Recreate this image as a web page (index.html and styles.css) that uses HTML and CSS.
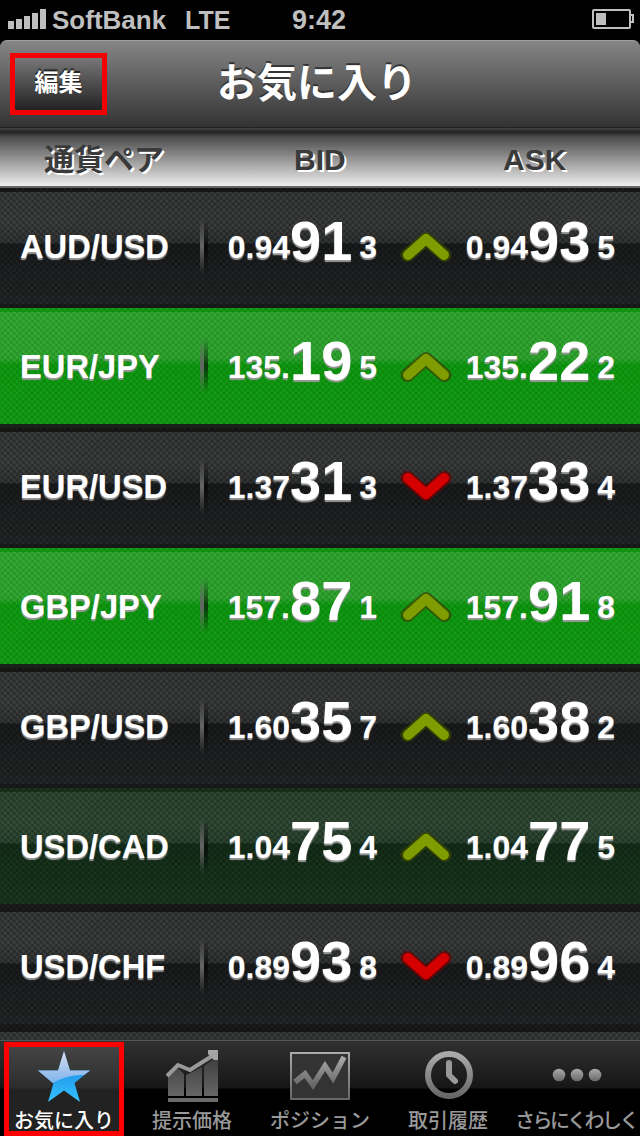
FILE: index.html
```
<!DOCTYPE html>
<html lang="ja">
  <head>
    <meta charset="UTF-8" />
    <title>お気に入り</title>
    <link rel="stylesheet" href="styles.css">
  </head>

  <body>
    <svg class="defs">
      <defs>
        <linearGradient id="gray" x1="0" y1="0" x2="0" y2="1">
          <stop offset="0" stop-color="#aaa" />
          <stop offset="1" stop-color="#686868" />
        </linearGradient>
        <linearGradient id="bar" x1="0" y1="0" x2="0" y2="1">
          <stop offset="0" stop-color="#3c3c3c" />
          <stop offset="1" stop-color="#666" />
        </linearGradient>
        <linearGradient id="blue" x1="0" y1="0" x2="0" y2="1">
          <stop offset="0" stop-color="#1478dc" />
          <stop offset="1" stop-color="#35c4ff" />
        </linearGradient>
        <linearGradient id="shine" x1="0" y1="0" x2="0" y2="1">
          <stop offset="0" stop-color="#dcdde8" />
          <stop offset="1" stop-color="#7db4ef" />
        </linearGradient>
      </defs>
      <symbol id="up" viewBox="0 0 56 36">
        <path class="edge" d="M9.500 27L28 11L46.500 27" />
        <path class="fill" d="M10 27L28 11L46 27" />
      </symbol>
      <symbol id="down" viewBox="0 0 56 36">
        <path class="edge" d="M9.500 10L28 26L46.500 10" />
        <path class="fill" d="M10 10L28 26L46 10" />
      </symbol>
    </svg>

    <div class="wrap">
      <div class="status">
        <svg class="signal" width="38" height="20" viewBox="0 0 38 20">
          <path d="M0 12h6v8H0zM8 10h6v10H8zM16 7h6v13h-6zM24 4h6v16h-6zM32 0h6v20h-6z" fill="#bfbfbf" />
        </svg>
        <span class="carrier">SoftBank</span>
        <span class="net">LTE</span>
        <span class="time">9:42</span>
        <svg class="battery" width="43" height="20" viewBox="0 0 43 20">
          <rect x="1" y="1" width="37" height="18" rx="1" fill="none" stroke="#bfbfbf" stroke-width="2" />
          <path d="M38 6h3v7h-3" fill="none" stroke="#bfbfbf" stroke-width="2" />
          <rect x="4" y="4" width="10" height="12" fill="#bfbfbf" />
        </svg>
      </div>

      <div class="nav">
        <button class="edit">編集</button>
        <h1>お気に入り</h1>
      </div>

      <div class="head">
        <span class="h-pair">通貨ペア</span>
        <span class="h-bid">BID</span>
        <span class="h-ask">ASK</span>
      </div>

      <div class="list">
        <div class="row">
          <div class="pair">AUD/USD</div>
          <div class="price"><span class="s">0.94</span><b>91</b><i>3</i></div>
          <svg class="arrow"><use href="#up" /></svg>
          <div class="price"><span class="s">0.94</span><b>93</b><i>5</i></div>
        </div>
        <div class="row green">
          <div class="pair">EUR/JPY</div>
          <div class="price"><span class="s">135.</span><b>19</b><i>5</i></div>
          <svg class="arrow"><use href="#up" /></svg>
          <div class="price"><span class="s">135.</span><b>22</b><i>2</i></div>
        </div>
        <div class="row">
          <div class="pair">EUR/USD</div>
          <div class="price"><span class="s">1.37</span><b>31</b><i>3</i></div>
          <svg class="arrow"><use href="#down" /></svg>
          <div class="price"><span class="s">1.37</span><b>33</b><i>4</i></div>
        </div>
        <div class="row green">
          <div class="pair">GBP/JPY</div>
          <div class="price"><span class="s">157.</span><b>87</b><i>1</i></div>
          <svg class="arrow"><use href="#up" /></svg>
          <div class="price"><span class="s">157.</span><b>91</b><i>8</i></div>
        </div>
        <div class="row">
          <div class="pair">GBP/USD</div>
          <div class="price"><span class="s">1.60</span><b>35</b><i>7</i></div>
          <svg class="arrow"><use href="#up" /></svg>
          <div class="price"><span class="s">1.60</span><b>38</b><i>2</i></div>
        </div>
        <div class="row fade">
          <div class="pair">USD/CAD</div>
          <div class="price"><span class="s">1.04</span><b>75</b><i>4</i></div>
          <svg class="arrow"><use href="#up" /></svg>
          <div class="price"><span class="s">1.04</span><b>77</b><i>5</i></div>
        </div>
        <div class="row">
          <div class="pair">USD/CHF</div>
          <div class="price"><span class="s">0.89</span><b>93</b><i>8</i></div>
          <svg class="arrow"><use href="#down" /></svg>
          <div class="price"><span class="s">0.89</span><b>96</b><i>4</i></div>
        </div>
        <div class="row"></div>
      </div>

      <div class="tabs">
        <div class="tab on">
          <svg width="54" height="56" viewBox="0 0 54 56">
            <path d="M27 3L33 22.500H53L37.500 35L43 54L27 42.500L11 54L16.500 35L1 22.500H21Z" fill="url(#blue)" />
            <path d="M27 3L33 22.500H53L47 27Q32 26 15.500 35L1 22.500H21Z" fill="url(#shine)" />
          </svg>
          <span>お気に入り</span>
        </div>
        <div class="tab">
          <svg width="54" height="56" viewBox="0 0 54 56">
            <path d="M3 29L13 20L19 26V48H3zM21 27L37 19V48H21zM39 18L53 8V48H39z" fill="url(#bar)" />
            <path d="M3 50H53V54H3z" fill="#6b6b6b" />
            <path d="M2 28L13 17L25 22L47 8" fill="none" stroke="#999" stroke-width="4" />
            <path d="M43 2H53V12H49L43 6z" fill="#a5a5a5" />
          </svg>
          <span>提示価格</span>
        </div>
        <div class="tab">
          <svg width="60" height="56" viewBox="0 0 60 56">
            <rect x="1" y="5" width="58" height="46" fill="#333" stroke="url(#gray)" stroke-width="2" />
            <path d="M5 34L15 26L23 37L35 18L43 30L54 9" fill="none" stroke="url(#gray)" stroke-width="5.500" />
          </svg>
          <span>ポジション</span>
        </div>
        <div class="tab">
          <svg width="54" height="56" viewBox="0 0 54 56">
            <circle cx="28" cy="27" r="21" fill="none" stroke="url(#gray)" stroke-width="6" />
            <path d="M28 15V27L34 33" fill="none" stroke="#999" stroke-width="6" stroke-linecap="round" stroke-linejoin="round" />
          </svg>
          <span>取引履歴</span>
        </div>
        <div class="tab">
          <svg width="54" height="56" viewBox="0 0 54 56">
            <g fill="url(#gray)">
              <circle cx="10" cy="27" r="6.300" />
              <circle cx="28" cy="27" r="6.300" />
              <circle cx="46" cy="27" r="6.300" />
            </g>
          </svg>
          <span class="long">さらにくわしく</span>
        </div>
      </div>
    </div>
  </body>
</html>
```
FILE: styles.css
```
* {
  padding: 0;
  margin: 0;
  box-sizing: border-box;
}

body {
  background-color: #000;
  font-family: "Liberation Sans", "Noto Sans CJK JP", sans-serif;
  overflow: hidden;
}

.defs {
  position: absolute;
  width: 0;
  height: 0;
}

.wrap {
  display: flex;
  flex-direction: column;
  width: 640px;
  height: 1136px;
}

/* 状态栏 */
.status {
  display: flex;
  height: 40px;
  padding: 0 5px 0 8px;
  color: #bfbfbf;
  font-weight: bold;
  font-size: 27px;
  line-height: 40px;
  white-space: nowrap;
}

.signal {
  margin-top: 9px;
}

.carrier {
  width: 133px;
  margin-left: 6px;
  font-size: 26px;
}

.net {
  width: 107px;
  font-size: 25px;
}

.battery {
  margin: 9px 0 0 auto;
}

/* 导航 */
.nav {
  display: flex;
  height: 88px;
  padding: 12px 10px 0;
  border-top: 1px solid #a0a0a0;
  border-bottom: 1px solid #222;
  border-radius: 7px 7px 0 0;
  background: linear-gradient(#858585, #333);
}

.edit {
  width: 97px;
  height: 62px;
  padding-bottom: 6px;
  border: 5px solid #f40000;
  background: linear-gradient(#777, #222);
  color: #fff;
  font: bold 24px "Noto Sans CJK JP", sans-serif;
  line-height: 46px;
  text-shadow: 0 -2px 1px #222;
}

h1 {
  width: 206px;
  margin-left: 110px;
  color: #fff;
  font: bold 40px "Noto Sans CJK JP", sans-serif;
  line-height: 54px;
  text-shadow: 0 -2px 0 #333;
  white-space: nowrap;
}

.head {
  display: flex;
  height: 60px;
  border-bottom: 2px solid #666;
  background: linear-gradient(#444 0, #222 4px, #4c4c4c 9px, #eee 100%);
  color: #3a3a3a;
  font-weight: bold;
  font-size: 30px;
  line-height: 64px;
  text-shadow: 2px 2px 0 #fff;
}

.h-pair {
  width: 250px;
  padding-left: 44px;
}

.h-bid {
  width: 210px;
  padding-left: 44px;
}

.h-ask {
  width: 180px;
  padding-left: 43px;
}

/* 列表 */
.list {
  height: 852px;
  overflow: hidden;
}

.row {
  display: flex;
  height: 120px;
  background:
    repeating-linear-gradient(45deg, rgba(0, 0, 0, .18) 0 1.7px, transparent 1.7px 4.24px),
    repeating-linear-gradient(-45deg, rgba(0, 0, 0, .18) 0 1.7px, transparent 1.7px 4.24px),
    linear-gradient(#1b1b1c 0, #1b1b1c 4px, #3b3d3d 4px, #3e3f3f 36px, #323535 55px, #1a1c1d 56px, #262829 116px, #1c1d1e 116px);
  color: #fff;
  font-weight: bold;
  font-size: 32px;
  text-shadow: 0 2px 1px #999;
}

.green {
  background:
    repeating-linear-gradient(45deg, rgba(0, 60, 0, .12) 0 1.7px, transparent 1.7px 4.24px),
    repeating-linear-gradient(-45deg, rgba(0, 60, 0, .12) 0 1.7px, transparent 1.7px 4.24px),
    linear-gradient(#149c14 0, #149c14 4px, #33ab33 4px, #32a832 50px, #0f9c11 57px, #159e15 116px, #1c1d1e 116px);
}

.fade {
  background:
    repeating-linear-gradient(45deg, rgba(0, 0, 0, .16) 0 1.7px, transparent 1.7px 4.24px),
    repeating-linear-gradient(-45deg, rgba(0, 0, 0, .16) 0 1.7px, transparent 1.7px 4.24px),
    linear-gradient(#1c351e 0, #1c351e 4px, #2f4b33 4px, #344e38 36px, #2b4630 55px, #15301a 56px, #1b3b20 116px, #1c1d1e 116px);
}

.pair {
  width: 228px;
  padding: 40px 0 0 20px;
  font-size: 32.7px;
  line-height: 38px;
  background:
    linear-gradient(transparent, #666, transparent) 200px 30px / 4px 56px no-repeat,
    linear-gradient(transparent, rgba(0, 0, 0, .6), transparent) 204px 30px / 4px 56px no-repeat;
}

.price {
  display: flex;
  width: 149px;
  line-height: 40px;
}

.price .s {
  display: flex;
  justify-content: flex-end;
  width: 62px;
  padding-top: 39px;
}

.price b {
  width: 62px;
  padding-top: 33px;
  font-size: 56px;
}

.price i {
  margin-left: auto;
  padding-top: 39px;
  font-style: normal;
}

.arrow {
  width: 56px;
  height: 36px;
  margin: 40px 12px 0 21px;
}

.edge,
.fill {
  fill: none;
  stroke-linecap: round;
  stroke-linejoin: round;
}

.edge {
  stroke-width: 14px;
  stroke-opacity: .75;
}

.fill {
  stroke-width: 10px;
}

#up .edge {
  stroke: #3b4600;
}

#up .fill {
  stroke: #7f9d00;
}

.green #up .fill {
  stroke: #8a9200;
}

#down .edge {
  stroke: #700;
}

#down .fill {
  stroke: #d40000;
}

/* 标签栏 */
.tabs {
  display: flex;
  height: 96px;
  border-top: 1px solid #555;
  background: linear-gradient(#303030, #161616 47px, #000 48px);
}

.tab {
  display: flex;
  flex-direction: column;
  align-items: center;
  width: 128px;
  padding-top: 7px;
  color: #999;
  font: 500 20px "Noto Sans CJK JP", sans-serif;
  line-height: 30px;
  white-space: nowrap;
}

.tab svg {
  flex: none;
}

.tab span {
  margin-top: 1px;
}

.tab .long {
  letter-spacing: -2.5px;
}

.on {
  width: 120px;
  height: 94px;
  margin: 1px 4px 0;
  padding-top: 1px;
  border: 5px solid #f00;
  background: linear-gradient(#444, #2c2c2c 41px, #222 42px);
  color: #fff;
}
```
